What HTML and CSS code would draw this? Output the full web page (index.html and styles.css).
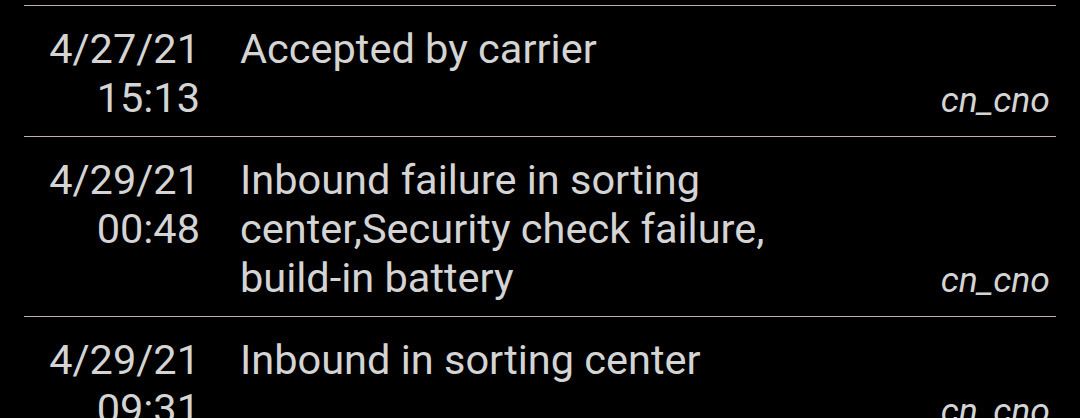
FILE: index.html
```html
<!DOCTYPE html>
<html lang="en">
<head>
    <meta charset="UTF-8">
    <title>Tracking history</title>
    <link rel="stylesheet" href="styles.css">
</head>
<body>
    <div class="history">
        <div class="event">
            <div class="event-time">4/27/21<br>15:13</div>
            <div class="event-text">Accepted by carrier</div>
            <div class="event-source">cn_cno</div>
        </div>
        <div class="event">
            <div class="event-time">4/29/21<br>00:48</div>
            <div class="event-text">Inbound failure in sorting center,Security check failure, build-in battery</div>
            <div class="event-source">cn_cno</div>
        </div>
        <div class="event">
            <div class="event-time">4/29/21<br>09:31</div>
            <div class="event-text">Inbound in sorting center</div>
            <div class="event-source">cn_cno</div>
        </div>
    </div>
</body>
</html>
```

FILE: styles.css
```css
/* Page styling */
body {
    margin: 0;
    background: #000;
    color: #d4d4d4;
    font-family: Roboto, "Liberation Sans", sans-serif;
    overflow: hidden;
}

/* List of tracking events */
.history {
    padding: 5px 24px 0 24px;
}

.event {
    display: grid;
    grid-template-columns: 176px 1fr auto;
    column-gap: 40px;
    border-top: 1px solid #bfb0ac;
    padding: 18px 6px 14px 0;
    font-size: 41.5px;
    line-height: 49px;
}

.event-time {
    text-align: right;
}

.event-text {
    max-width: 580px;
}

/* Source tag, bottom right */
.event-source {
    align-self: end;
    font-style: italic;
    font-size: 35.5px;
    margin-bottom: -3px;
}
```
